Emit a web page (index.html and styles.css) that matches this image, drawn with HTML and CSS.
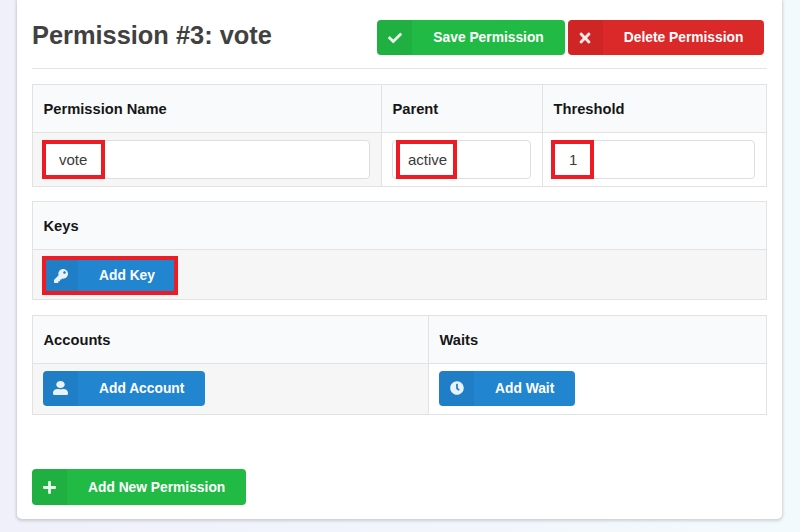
FILE: index.html
```html
<!DOCTYPE html>
<html>

<head>
  <meta charset="utf-8">
  <link rel="stylesheet" href="styles.css">
</head>

<body>
  <div class="card">
    <div class="page-header">
      <h1>Permission #3: vote</h1>
      <div class="header-actions">
        <button class="btn green">
          <span class="btn-icon"><svg width="14" height="14" viewBox="0 0 512 512"><path d="M173.898 439.404l-166.4-166.4c-9.997-9.997-9.997-26.206 0-36.204l36.203-36.204c9.997-9.998 26.207-9.998 36.204 0L192 312.69 432.095 72.596c9.997-9.997 26.207-9.997 36.204 0l36.203 36.204c9.997 9.997 9.997 26.206 0 36.204l-294.4 294.401c-9.998 9.997-26.207 9.997-36.204-.001z"/></svg></span>
          <span class="btn-label">Save Permission</span>
        </button>
        <button class="btn red">
          <span class="btn-icon"><svg width="12" height="16" viewBox="0 0 352 512"><path d="M242.72 256l100.07-100.07c12.28-12.28 12.28-32.19 0-44.48l-22.24-22.24c-12.28-12.28-32.19-12.28-44.48 0L176 189.28 75.93 89.21c-12.28-12.28-32.19-12.28-44.48 0L9.21 111.45c-12.28 12.28-12.28 32.19 0 44.48L109.28 256 9.21 356.07c-12.28 12.28-12.28 32.19 0 44.48l22.24 22.24c12.28 12.28 32.2 12.28 44.48 0L176 322.72l100.07 100.07c12.28 12.28 32.2 12.28 44.48 0l22.24-22.24c12.28-12.28 12.28-32.19 0-44.48L242.72 256z"/></svg></span>
          <span class="btn-label">Delete Permission</span>
        </button>
      </div>
    </div>

    <table class="perm-table first">
      <colgroup>
        <col class="col-name">
        <col class="col-parent">
        <col>
      </colgroup>
      <thead>
        <tr>
          <th>Permission Name</th>
          <th>Parent</th>
          <th>Threshold</th>
        </tr>
      </thead>
      <tbody>
        <tr>
          <td class="shaded">
            <div class="field">
              <input type="text" value="vote">
              <span class="mark mark-name"></span>
            </div>
          </td>
          <td>
            <div class="field">
              <input type="text" value="active">
              <span class="mark mark-parent"></span>
            </div>
          </td>
          <td>
            <div class="field">
              <input type="text" value="1">
              <span class="mark mark-threshold"></span>
            </div>
          </td>
        </tr>
      </tbody>
    </table>

    <table class="perm-table keys">
      <thead>
        <tr>
          <th>Keys</th>
        </tr>
      </thead>
      <tbody>
        <tr>
          <td class="shaded">
            <div class="field inline">
              <button class="btn blue">
                <span class="btn-icon"><svg width="14" height="14" viewBox="0 0 512 512"><path d="M512 176.001C512 273.203 433.202 352 336 352c-11.22 0-22.19-1.062-32.827-3.069l-24.012 27.014A23.999 23.999 0 0 1 261.223 384H224v40c0 13.255-10.745 24-24 24h-40v40c0 13.255-10.745 24-24 24H24c-13.255 0-24-10.745-24-24v-78.059c0-6.365 2.529-12.47 7.029-16.971l161.802-161.802C163.108 213.814 160 195.271 160 176 160 78.798 238.797.001 335.999 0 433.488-.001 512 78.511 512 176.001zM336 128c0 26.51 21.49 48 48 48s48-21.49 48-48-21.49-48-48-48-48 21.49-48 48z"/></svg></span>
                <span class="btn-label">Add Key</span>
              </button>
              <span class="mark mark-key"></span>
            </div>
          </td>
        </tr>
      </tbody>
    </table>

    <table class="perm-table accounts">
      <colgroup>
        <col class="col-accounts">
        <col>
      </colgroup>
      <thead>
        <tr>
          <th>Accounts</th>
          <th>Waits</th>
        </tr>
      </thead>
      <tbody>
        <tr>
          <td class="shaded">
            <button class="btn blue">
              <span class="btn-icon"><svg width="15" height="14" viewBox="0 0 448 512" preserveAspectRatio="none"><path d="M224 256c70.7 0 128-57.3 128-128S294.7 0 224 0 96 57.3 96 128s57.3 128 128 128zm89.6 32h-16.7c-22.2 10.2-46.9 16-72.9 16s-50.6-5.8-72.9-16h-16.7C60.2 288 0 348.2 0 422.4V464c0 26.5 21.5 48 48 48h352c26.5 0 48-21.5 48-48v-41.6c0-74.2-60.2-134.4-134.4-134.4z"/></svg></span>
              <span class="btn-label">Add Account</span>
            </button>
          </td>
          <td>
            <button class="btn blue">
              <span class="btn-icon"><svg width="14" height="14" viewBox="0 0 512 512"><path d="M256,8C119,8,8,119,8,256S119,504,256,504,504,393,504,256,393,8,256,8Zm92.49,313h0l-20,25a16,16,0,0,1-22.49,2.5h0l-67-49.72a40,40,0,0,1-15-31.23V112a16,16,0,0,1,16-16h32a16,16,0,0,1,16,16V256l58,42.5A16,16,0,0,1,348.49,321Z"/></svg></span>
              <span class="btn-label">Add Wait</span>
            </button>
          </td>
        </tr>
      </tbody>
    </table>

    <button class="btn green add-new">
      <span class="btn-icon"><svg width="13" height="15" viewBox="0 0 448 512"><path d="M416 208H272V64c0-17.67-14.33-32-32-32h-32c-17.67 0-32 14.33-32 32v144H32c-17.67 0-32 14.33-32 32v32c0 17.67 14.33 32 32 32h144v144c0 17.67 14.33 32 32 32h32c17.67 0 32-14.33 32-32V304h144c17.67 0 32-14.33 32-32v-32c0-17.67-14.33-32-32-32z"/></svg></span>
      <span class="btn-label">Add New Permission</span>
    </button>
  </div>
</body>

</html>
```

FILE: styles.css
```css
* {
  box-sizing: border-box;
}

html,
body {
  height: 100%;
}

body {
  margin: 0;
  font-family: "Liberation Sans", Arial, sans-serif;
  font-size: 14px;
  color: rgba(0, 0, 0, 0.87);
  background: linear-gradient(to right, #f0f0fb, #f3fafd);
  overflow: hidden;
}

.card {
  width: 765px;
  height: 519px;
  margin-left: 17px;
  padding: 20px 15px 14px;
  background: #fff;
  border-radius: 0 0 5px 5px;
  box-shadow: 0 1px 3px 1px rgba(34, 36, 38, 0.18);
}

.page-header {
  display: flex;
  justify-content: space-between;
  height: 49px;
  margin-bottom: 15px;
  border-bottom: 1px solid #e4e4e5;
}

.page-header h1 {
  margin: 0;
  font-size: 25.4px;
  line-height: 30px;
  color: #414141;
}

.header-actions {
  display: flex;
  gap: 3px;
  margin-right: 2.6px;
  height: 35px;
}

.btn {
  display: inline-flex;
  align-items: center;
  height: 35px;
  padding: 0;
  border: none;
  border-radius: 4px;
  color: #fff;
  font-family: inherit;
  font-size: 13.8px;
  font-weight: bold;
}

.btn.green {
  background: #21ba45;
}

.btn.red {
  background: #db2828;
}

.btn.blue {
  background: #2185d0;
}

.btn-icon {
  display: flex;
  align-items: center;
  justify-content: center;
  width: 35px;
  height: 100%;
  background: rgba(0, 0, 0, 0.05);
  border-radius: 4px 0 0 4px;
}

.btn-icon svg {
  fill: #fff;
  opacity: 0.9;
}

.btn-label {
  padding: 0 21px;
}

.perm-table {
  width: 100%;
  border-collapse: collapse;
  table-layout: fixed;
  border: 1px solid #e2e2e3;
}

.perm-table.first {
  margin-bottom: 14px;
}

.perm-table.keys {
  margin-bottom: 15px;
}

.perm-table th {
  height: 48px;
  padding: 0 10px 0 10.5px;
  text-align: left;
  font-size: 14.7px;
  color: #161616;
  background: #f9fafb;
  border-bottom: 1px solid #e2e2e3;
  border-left: 1px solid #e2e2e3;
}

.perm-table td {
  height: 50px;
  padding: 6px 11px 6px 10px;
  border-left: 1px solid #e2e2e3;
}

.perm-table.first td {
  padding-top: 7px;
  padding-bottom: 7px;
}

.perm-table.keys td {
  padding-top: 7px;
  padding-bottom: 5px;
}

.perm-table.accounts td {
  height: 51px;
  padding-top: 5px;
  padding-bottom: 7px;
}

.perm-table td.shaded {
  background: #f6f6f6;
}

.col-name {
  width: 349px;
}

.col-parent {
  width: 161px;
}

.col-accounts {
  width: 396px;
}

.field {
  position: relative;
}

.field.inline {
  display: inline-block;
  vertical-align: top;
}

.field input {
  display: block;
  width: 100%;
  height: 39px;
  padding: 0 14px 0 15px;
  border: 1px solid #dedede;
  border-radius: 4px;
  background: #fff;
  color: #3a3a3a;
  font-family: inherit;
  font-size: 15px;
  outline: none;
}

/* red highlight boxes sit on top of the fields */
.mark {
  position: absolute;
  top: 0;
  height: 39px;
  border: 4px solid #ed1c24;
  pointer-events: none;
}

.mark-name {
  left: -1px;
  width: 63px;
}

.mark-parent {
  left: 4px;
  width: 61px;
}

.mark-threshold {
  left: -2px;
  width: 43px;
}

.mark-key {
  left: -1px;
  width: 136px;
  top: -2px;
}

.add-new {
  height: 36px;
  margin-top: 54px;
}
```
